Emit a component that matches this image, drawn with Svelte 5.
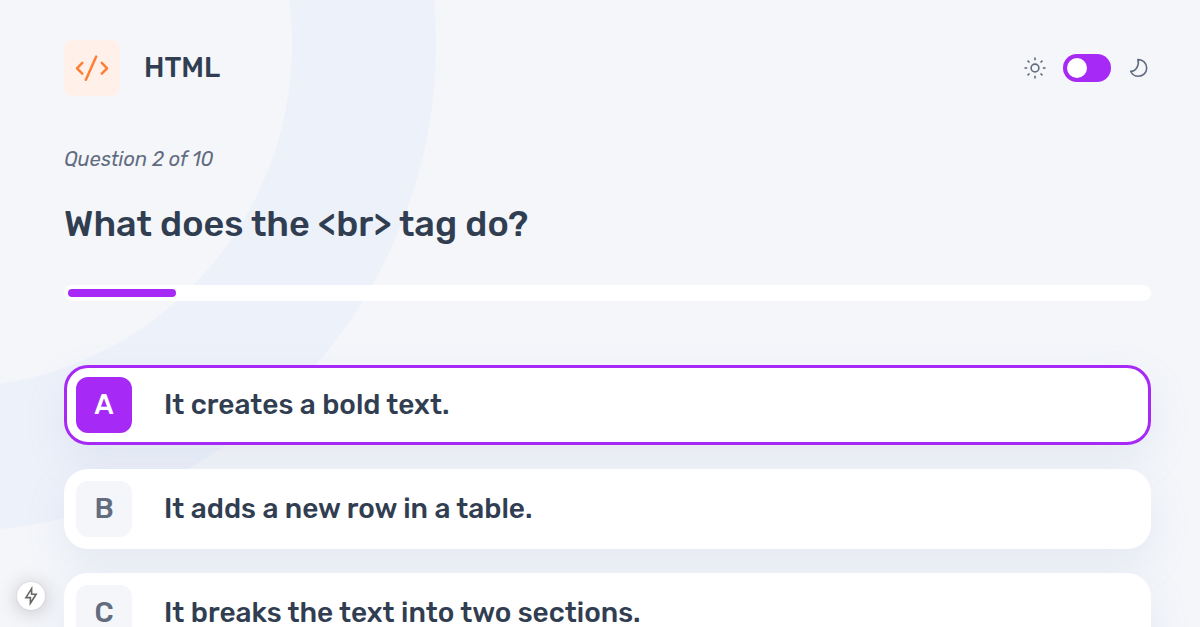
<script>
  const question = { number: 2, total: 10, text: 'What does the <br> tag do?' };
  const answers = [
    { letter: 'A', text: 'It creates a bold text.' },
    { letter: 'B', text: 'It adds a new row in a table.' },
    { letter: 'C', text: 'It breaks the text into two sections.' }
  ];
  const rays = [0, 45, 90, 135, 180, 225, 270, 315];

  let selected = $state('A');
  let dark = $state(false);
</script>

<div class="page">
  <svg class="ring" aria-hidden="true" width="448" height="540" viewBox="0 0 448 540">
    <circle cx="-52" cy="44" r="416" />
  </svg>

  <header>
    <div class="subject">
      <span class="badge">
        <svg width="40" height="40" viewBox="0 0 40 40" aria-hidden="true">
          <path d="M10.3 14.9 L5 20.3 L10.3 25.7 M29.8 14.9 L35.1 20.3 L29.8 25.7 M24.2 8.6 L13.9 31.8" />
        </svg>
      </span>
      <span class="name">HTML</span>
    </div>

    <div class="theme">
      <svg width="24" height="24" viewBox="0 0 24 24" aria-hidden="true">
        <circle cx="12" cy="12" r="3.9" />
        {#each rays as angle}
          <path d="M12 1.5 V4.2" transform="rotate({angle} 12 12)" />
        {/each}
      </svg>
      <input type="checkbox" class="switch" aria-label="Dark theme" bind:checked={dark} />
      <svg width="24" height="24" viewBox="0 0 24 24" aria-hidden="true">
        <path d="M10.9 3.6 C15.8 3.3 19.7 7.2 19.7 12 C19.7 16.7 16 20.3 11.4 20.3 C7.9 20.3 5 18.4 3.7 15.3 C8.7 15.4 12.6 9.5 10.9 3.6 Z" />
      </svg>
    </div>
  </header>

  <main>
    <p class="count">Question {question.number} of {question.total}</p>
    <h1>{question.text}</h1>
    <div
      class="progress"
      role="progressbar"
      aria-label="Progress"
      aria-valuemin="0"
      aria-valuemax={question.total}
      aria-valuenow={question.number - 1}
    >
      <div class="bar" style="width: {((question.number - 1) / question.total) * 100}%"></div>
    </div>

    <div class="answers">
      {#each answers as answer}
        <button
          type="button"
          class="answer"
          class:selected={selected === answer.letter}
          aria-pressed={selected === answer.letter}
          onclick={() => (selected = answer.letter)}
        >
          <span class="letter">{answer.letter}</span>
          <span>{answer.text}</span>
        </button>
      {/each}
    </div>
  </main>

  <button type="button" class="flash" aria-label="Quick actions">
    <svg width="20" height="20" viewBox="0 0 20 20" aria-hidden="true">
      <path d="M10.6 2.6 L4.9 11.6 H9.4 V17.3 L15.1 8.3 H10.6 Z" />
    </svg>
  </button>
</div>

<style>
  :global(body) {
    margin: 0;
    background: #f4f6fa;
  }

  .page {
    position: relative;
    box-sizing: border-box;
    min-height: 100vh;
    padding: 40px 49px 0 64px;
    overflow: hidden;
    color: #313e51;
    font-family: Rubik, Roboto, sans-serif;
    font-weight: 500;
  }

  .ring {
    position: absolute;
    top: 0;
    left: 0;
  }

  .ring circle {
    fill: none;
    stroke: #edf1fa;
    stroke-width: 144;
  }

  header,
  main {
    position: relative;
  }

  header {
    display: flex;
    align-items: center;
    justify-content: space-between;
  }

  .subject {
    display: flex;
    align-items: center;
    gap: 24px;
    font-size: 28px;
    line-height: 28px;
  }

  .badge {
    display: grid;
    place-items: center;
    width: 56px;
    height: 56px;
    border-radius: 8px;
    background: #fff1e9;
  }

  .badge path {
    fill: none;
    stroke: #ff7e35;
    stroke-width: 2.5;
    stroke-linecap: round;
    stroke-linejoin: round;
  }

  .theme {
    display: flex;
    align-items: center;
    gap: 16px;
  }

  .theme svg {
    fill: none;
    stroke: #626c7f;
    stroke-width: 1.6;
    stroke-linejoin: round;
  }

  .switch {
    appearance: none;
    box-sizing: border-box;
    width: 48px;
    height: 28px;
    margin: 0;
    padding: 4px;
    border-radius: 14px;
    background: #a729f5;
    cursor: pointer;
  }

  .switch::before {
    content: '';
    display: block;
    width: 20px;
    height: 20px;
    border-radius: 50%;
    background: #fff;
  }

  .switch:checked::before {
    margin-left: auto;
  }

  .count {
    margin: 48px 0 0;
    color: #626c7f;
    font-size: 20px;
    font-style: italic;
    font-weight: 400;
    line-height: 30px;
  }

  h1 {
    margin: 28px 0 0;
    font-size: 36px;
    font-weight: 500;
    line-height: 44px;
  }

  .progress {
    box-sizing: border-box;
    height: 16px;
    margin-top: 39px;
    padding: 4px;
    border-radius: 8px;
    background: #fff;
  }

  .bar {
    height: 8px;
    border-radius: 4px;
    background: #a729f5;
  }

  .answers {
    display: grid;
    gap: 24px;
    margin-top: 64px;
  }

  .answer {
    display: flex;
    align-items: center;
    gap: 32px;
    padding: 9px;
    border: 3px solid transparent;
    border-radius: 24px;
    background: #fff border-box;
    box-shadow: 0 16px 40px rgba(143, 160, 193, 0.14);
    color: inherit;
    font: inherit;
    font-size: 28px;
    line-height: 28px;
    text-align: left;
    cursor: pointer;
  }

  .letter {
    display: grid;
    flex: none;
    place-items: center;
    width: 56px;
    height: 56px;
    border-radius: 12px;
    background: #f4f6fa;
    color: #626c7f;
  }

  .selected {
    border-color: #a729f5;
  }

  .selected .letter {
    background: #a729f5;
    color: #fff;
  }

  .flash {
    position: fixed;
    bottom: 17px;
    left: 17px;
    display: grid;
    place-items: center;
    width: 28px;
    height: 28px;
    padding: 0;
    border: 0;
    border-radius: 50%;
    background: #fff;
    box-shadow: 0 0 2px rgba(0, 0, 0, 0.15), 0 2px 20px rgba(0, 0, 0, 0.22);
    cursor: pointer;
  }

  .flash path {
    fill: none;
    stroke: #666;
    stroke-width: 1.6;
    stroke-linejoin: miter;
  }
</style>
